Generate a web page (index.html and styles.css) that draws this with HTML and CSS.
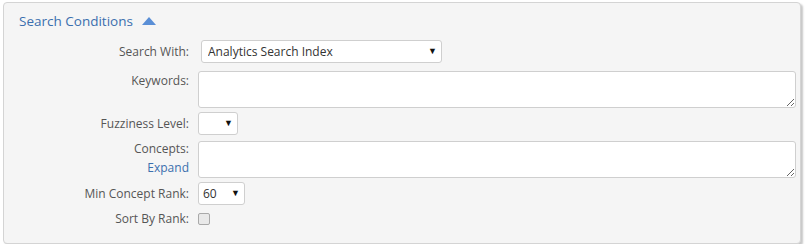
FILE: index.html
```html
<!DOCTYPE html>
<html lang="en">
<head>
  <meta charset="UTF-8">
  <title>Search Conditions</title>
  <link rel="stylesheet" href="styles.css">
</head>
<body>
  <div class="panel">
    <div class="panel-title">
      <span>Search Conditions</span>
      <span class="toggle"></span>
    </div>

    <div class="form">
      <!-- Search With -->
      <div class="row row-select first">
        <label class="label">Search With:</label>
        <div class="select-wrap wide">
          <select class="select"><option>Analytics Search Index</option></select>
          <span class="caret">&#9660;</span>
        </div>
      </div>

      <!-- Keywords -->
      <div class="row row-area">
        <label class="label">Keywords:</label>
        <textarea class="area"></textarea>
      </div>

      <!-- Fuzziness -->
      <div class="row row-select fuzzy">
        <label class="label">Fuzziness Level:</label>
        <div class="select-wrap small">
          <select class="select"><option></option></select>
          <span class="caret">&#9660;</span>
        </div>
      </div>

      <!-- Concepts -->
      <div class="row row-area concepts">
        <label class="label">Concepts:<br><a class="expand" href="#">Expand</a></label>
        <textarea class="area"></textarea>
      </div>

      <!-- Min Concept Rank -->
      <div class="row row-select rank">
        <label class="label">Min Concept Rank:</label>
        <div class="select-wrap medium">
          <select class="select"><option>60</option></select>
          <span class="caret">&#9660;</span>
        </div>
      </div>

      <!-- Sort By Rank -->
      <div class="row row-check">
        <label class="label">Sort By Rank:</label>
        <input class="check" type="checkbox">
      </div>
    </div>
  </div>
</body>
</html>
```

FILE: styles.css
```css
body {
  margin: 0;
  padding: 2px 0 0 3px;
  background: #fff;
  font-family: 'Open Sans', sans-serif;
  font-size: 12px;
  color: #555;
}

.panel {
  width: 798px;
  height: 242px;
  box-sizing: border-box;
  border: 1px solid #d4d4d4;
  border-radius: 4px;
  background: #f5f5f5;
  box-shadow: 2px 2px 2px rgba(0, 0, 0, 0.22);
  padding: 8px 0 0 15px;
}

.panel-title {
  display: flex;
  align-items: center;
  height: 20px;
  font-size: 13.5px;
  color: #3b6fae;
}

.toggle {
  width: 0;
  height: 0;
  margin-left: 9px;
  margin-top: -1px;
  border-left: 7px solid transparent;
  border-right: 7px solid transparent;
  border-bottom: 8px solid #5a8fd6;
}

.form {
  margin-top: 9px;
}

.row {
  display: grid;
  grid-template-columns: 170px 1fr;
  column-gap: 9px;
}

.label {
  text-align: right;
  line-height: 19px;
}

.row-select {
  align-items: center;
  height: 23px;
}

.concepts .label {
  margin-top: -2px;
}

.first { margin-bottom: 8px; }
.row-area { margin-bottom: 4px; }
.fuzzy { margin-bottom: 6px; }
.rank { margin-bottom: 4px; }

.select-wrap {
  position: relative;
  height: 23px;
}

.select {
  appearance: none;
  -webkit-appearance: none;
  width: 100%;
  height: 23px;
  box-sizing: border-box;
  border: 1px solid #cfcfcf;
  border-radius: 3px;
  background: #fff;
  font-family: 'Open Sans', sans-serif;
  font-size: 12px;
  color: #333;
  padding: 0 0 0 4px;
  outline: none;
}

.caret {
  position: absolute;
  right: 5px;
  top: 6px;
  font-size: 9px;
  line-height: 9px;
  color: #111;
  pointer-events: none;
}

.wide { width: 241px; margin-left: 3px; }
.wide .select { padding-left: 6px; }
.small { width: 40px; }
.medium { width: 47px; }

.area {
  width: 598px;
  height: 37px;
  box-sizing: border-box;
  border: 1px solid #cfcfcf;
  border-radius: 3px;
  background: #fff;
  resize: vertical;
  outline: none;
  display: block;
}

.expand {
  color: #3b6fae;
  text-decoration: none;
}

.row-check {
  align-items: center;
  height: 14px;
}

.check {
  appearance: none;
  -webkit-appearance: none;
  width: 12px;
  height: 12px;
  margin: 0;
  box-sizing: border-box;
  border: 1px solid #a9a9a9;
  border-radius: 2px;
  background: #e9e9e9;
}
```
